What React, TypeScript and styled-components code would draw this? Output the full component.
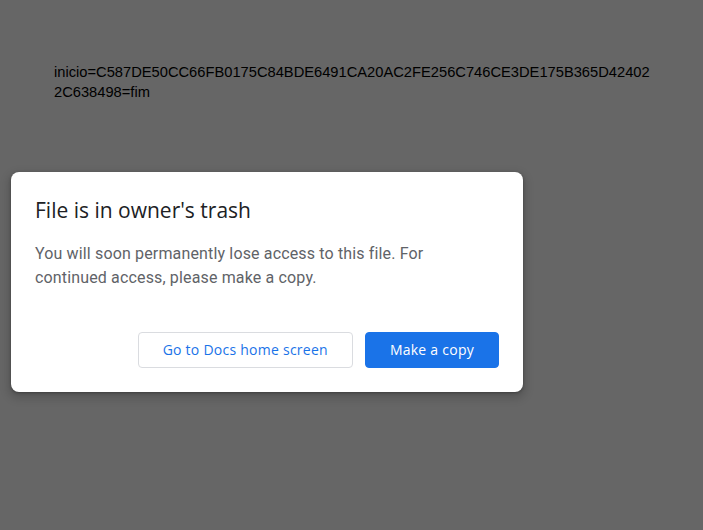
import React from 'react';
import styled, { createGlobalStyle } from 'styled-components';

const GlobalStyle = createGlobalStyle`
  html, body {
    margin: 0;
    padding: 0;
    background-color: #666666;
  }
  body {
    min-height: 530px;
    font-family: "Liberation Sans", Arial, sans-serif;
  }
`;

const Page = styled.div`
  display: flex;
  flex-direction: column;
  align-items: flex-start;
  padding: 62px 0 0 11px;
`;

const TokenText = styled.p`
  margin: 0 0 0 43px;
  width: 600px;
  font-family: "Liberation Sans", Arial, sans-serif;
  font-size: 14.7px;
  line-height: 20px;
  color: #000000;
  word-break: break-all;
`;

const Dialog = styled.div`
  display: flex;
  flex-direction: column;
  box-sizing: border-box;
  width: 512px;
  margin-top: 70px;
  padding: 24px;
  background-color: #ffffff;
  border-radius: 8px;
  box-shadow: 0 4px 8px 3px rgba(0, 0, 0, 0.15), 0 1px 3px rgba(0, 0, 0, 0.3);
`;

const Title = styled.h1`
  margin: 0;
  font-family: "Open Sans", Roboto, sans-serif;
  font-size: 21px;
  font-weight: 400;
  line-height: 28px;
  color: #202124;
`;

const Message = styled.p`
  margin: 18px 0 0 0;
  max-width: 440px;
  font-family: Roboto, "Noto Sans", sans-serif;
  font-size: 16px;
  letter-spacing: 0.15px;
  line-height: 24px;
  color: #5f6368;
`;

const Actions = styled.div`
  display: flex;
  justify-content: flex-end;
  gap: 12px;
  margin-top: 42px;
`;

const Button = styled.button<{ $primary?: boolean }>`
  box-sizing: border-box;
  height: 36px;
  padding: 0 24px;
  border-radius: 4px;
  border: 1px solid ${(p) => (p.$primary ? '#1a73e8' : '#dadce0')};
  background-color: ${(p) => (p.$primary ? '#1a73e8' : '#ffffff')};
  color: ${(p) => (p.$primary ? '#ffffff' : '#1a73e8')};
  font-family: "Open Sans", Roboto, sans-serif;
  font-size: 14px;
  font-weight: 500;
  letter-spacing: 0.25px;
  line-height: 34px;
  cursor: pointer;
`;

const App: React.FC = () => {
  return (
    <>
      <GlobalStyle />
      <Page>
        <TokenText>
          inicio=C587DE50CC66FB0175C84BDE6491CA20AC2FE256C746CE3DE175B365D424022C638498=fim
        </TokenText>
        <Dialog>
          <Title>File is in owner's trash</Title>
          <Message>
            You will soon permanently lose access to this file. For continued access, please make a
            copy.
          </Message>
          <Actions>
            <Button>Go to Docs home screen</Button>
            <Button $primary>Make a copy</Button>
          </Actions>
        </Dialog>
      </Page>
    </>
  );
};

export default App;
